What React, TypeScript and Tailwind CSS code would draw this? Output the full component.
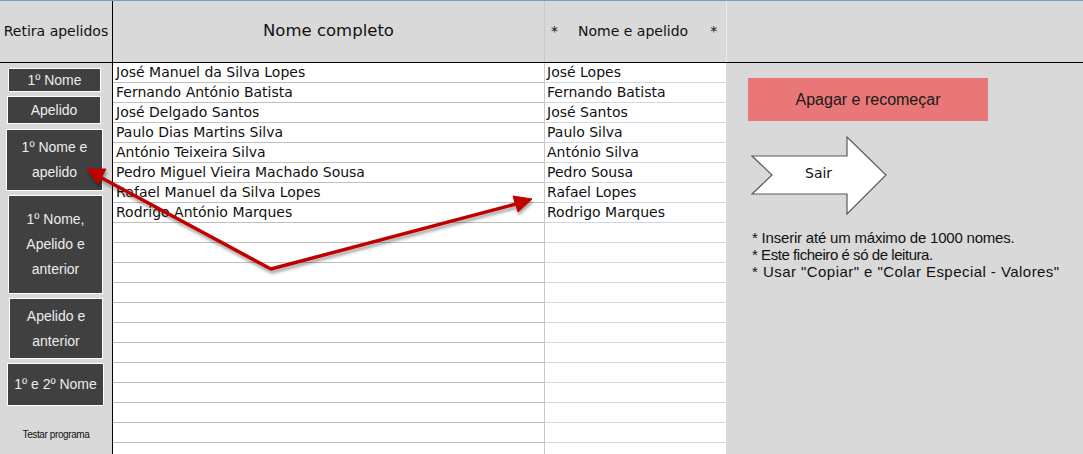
import { FC } from "react";

const nomes = [
    ["José Manuel da Silva Lopes", "José Lopes"],
    ["Fernando António Batista", "Fernando Batista"],
    ["José Delgado Santos", "José Santos"],
    ["Paulo Dias Martins Silva", "Paulo Silva"],
    ["António Teixeira Silva", "António Silva"],
    ["Pedro Miguel Vieira Machado Sousa", "Pedro Sousa"],
    ["Rafael Manuel da Silva Lopes", "Rafael Lopes"],
    ["Rodrigo António Marques", "Rodrigo Marques"],
];

const linhas = Array.from({ length: 20 }, (_, i) => nomes[i] ?? ["", ""]);

const cellFont = "font-['DejaVu_Sans','Liberation_Sans',sans-serif]";

interface BotaoProps {
    linhas: string[];
    className: string;
}

const Botao: FC<BotaoProps> = ({ linhas, className }) => {
    return (
        <div className={`bg-[#404040] border border-white flex flex-col items-center justify-center text-[14px] leading-[25px] text-[#ececec] ${className}`}>
            {linhas.map((l) => (
                <span key={l}>{l}</span>
            ))}
        </div>
    );
};

const SetaSair: FC = () => {
    return (
        <div className="relative w-[137px] h-[80px] ml-[25px] mt-[15px]">
            <svg width="137" height="80" viewBox="0 0 137 80" className="absolute inset-0">
                <path d="M1 20 H96 V1 L135 39 L96 78 V58 H1 L21 39 Z" fill="#ffffff" stroke="#5a5a5a" strokeWidth="1.2" />
            </svg>
            <span className={`absolute left-[54px] top-[29px] text-[14px] leading-[17px] text-[#111] ${cellFont}`}>Sair</span>
        </div>
    );
};

const Setas: FC = () => {
    return (
        <svg className="absolute inset-0 pointer-events-none" width="1083" height="454">
            <defs>
                <filter id="sombra" x="-10%" y="-10%" width="120%" height="130%">
                    <feDropShadow dx="1" dy="3" stdDeviation="1.5" floodColor="#000" floodOpacity="0.35" />
                </filter>
            </defs>
            <g filter="url(#sombra)" fill="#c00000" stroke="#c00000">
                <line x1="269" y1="267" x2="100" y2="176" strokeWidth="3.5" strokeLinecap="round" />
                <polygon points="87,168 106,168 98,183" strokeWidth="1" />
                <line x1="271" y1="268" x2="516" y2="203" strokeWidth="3.5" strokeLinecap="round" />
                <polygon points="532,198 513,195 518,211" strokeWidth="1" />
            </g>
        </svg>
    );
};

export default function App() {
    return (
        <div className="relative w-[1083px] h-[454px] overflow-hidden bg-[#d9d9d9] border-t border-[#7a9cc6] font-['Liberation_Sans',Arial,sans-serif]">
            <div className="flex h-[62px] border-b border-black">
                <div className={`w-[113px] border-r border-black flex items-center justify-center text-[14px] text-[#111] ${cellFont}`}>
                    Retira apelidos
                </div>
                <div className={`w-[432px] border-r border-[#c8c8c8] flex items-center justify-center text-[16.5px] text-[#111] ${cellFont}`}>
                    Nome completo
                </div>
                <div className={`w-[182px] border-r border-[#ececec] flex items-center text-[14px] text-[#111] pl-[6px] ${cellFont}`}>
                    <span>*</span>
                    <span className="ml-[20px]">Nome e apelido</span>
                    <span className="ml-[22px]">*</span>
                </div>
                <div className="flex-1" />
            </div>

            <div className="flex h-[391px]">
                <div className="w-[113px] border-r border-black flex flex-col items-start">
                    <Botao linhas={["1º Nome"]} className="ml-[8px] mt-[5px] w-[93px] h-[24px]" />
                    <Botao linhas={["Apelido"]} className="ml-[7px] mt-[4px] w-[94px] h-[28px]" />
                    <Botao linhas={["1º Nome e", "apelido"]} className="ml-[6px] mt-[5px] w-[97px] h-[62px]" />
                    <Botao linhas={["1º Nome,", "Apelido e", "anterior"]} className="ml-[8px] mt-[4px] w-[95px] h-[99px]" />
                    <Botao linhas={["Apelido e", "anterior"]} className="ml-[9px] mt-[4px] w-[94px] h-[61px]" />
                    <Botao linhas={["1º e 2º Nome"]} className="ml-[7px] mt-[4px] w-[97px] h-[43px]" />
                    <div className="w-full text-center mt-[21px] text-[10px] tracking-[-0.4px] text-[#111]">
                        Testar programa
                    </div>
                </div>

                <div className={`w-[432px] border-r border-[#c8c8c8] bg-white ${cellFont}`}>
                    {linhas.map(([completo], i) => (
                        <div key={i} className="h-[20px] border-b border-[#bfbfbf] pl-[3px] text-[14px] leading-[19px] text-[#111] whitespace-nowrap">
                            {completo}
                        </div>
                    ))}
                </div>

                <div className={`w-[181px] bg-white ${cellFont}`}>
                    {linhas.map(([, curto], i) => (
                        <div key={i} className="h-[20px] border-b border-[#d0d7e5] pl-[2px] text-[14px] leading-[19px] text-[#111] whitespace-nowrap">
                            {curto}
                        </div>
                    ))}
                </div>

                <div className="flex-1 flex flex-col items-start">
                    <div className="ml-[22px] mt-[15px] w-[240px] h-[43px] bg-[#e97777] flex items-center justify-center text-[16px] text-[#1a1a1a]">
                        Apagar e recomeçar
                    </div>
                    <SetaSair />
                    <div className="ml-[26px] mt-[13px] text-[15px] leading-[17px] text-[#111]">
                        <div className="tracking-[-0.2px]">* Inserir até um máximo de 1000 nomes.</div>
                        <div className="tracking-[-0.45px]">* Este ficheiro é só de leitura.</div>
                        <div className="tracking-[0.45px]">* Usar "Copiar" e "Colar Especial - Valores"</div>
                    </div>
                </div>
            </div>

            <Setas />
        </div>
    );
}
